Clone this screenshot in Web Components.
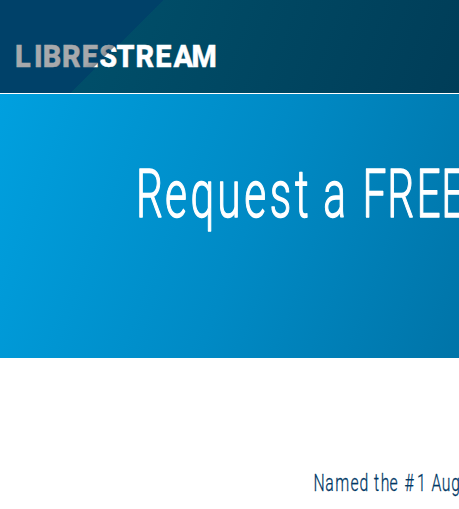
<!DOCTYPE html>
<html lang="en">
<head>
<meta charset="utf-8">
<title>Librestream</title>
<style>
body{margin:0;background:#fff;overflow:hidden;font-family:Roboto,"Liberation Sans",sans-serif}
</style>
</head>
<body>
<site-page></site-page>
<script>
// Condensed text line: "xs" holds the pen position of every character.
class CondensedText extends HTMLElement {
  connectedCallback() {
    const a = n => this.getAttribute(n);
    const s = +a('scale');
    const xs = a('xs').split(' ').map(v => (v / s).toFixed(2)).join(' ');
    this.attachShadow({mode: 'open'}).innerHTML = `
      <style>:host{display:block}svg{display:block;width:100%;height:100%;overflow:visible}
      text{font-family:Roboto,"Liberation Sans",sans-serif;white-space:pre;font-kerning:none;stroke:currentColor;stroke-linejoin:round}</style>
      <svg><text transform="scale(${s} 1)" x="${xs}" y="${a('base')}" font-size="${a('size')}" font-weight="300" stroke-width="${a('stroke')}" fill="currentColor">${a('text')}</text></svg>`;
  }
}
customElements.define('condensed-text', CondensedText);

customElements.define('site-logo', class extends HTMLElement {
  constructor() {
    super();
    const s = 0.93;
    const xs = [-0.9, 18, 26.7, 46, 65.8, 83.2, 100.4, 119.4, 139.3, 157.4, 175.6].map(v => (v / s).toFixed(2)).join(' ');
    this.attachShadow({mode: 'open'}).innerHTML = `
      <style>:host{display:block;width:220px;height:30px}svg{display:block;overflow:visible}
      text{font:800 31px Roboto,"Liberation Sans",sans-serif;font-kerning:none}</style>
      <svg width="220" height="30" role="img" aria-label="Librestream">
        <defs><linearGradient id="g" gradientUnits="userSpaceOnUse" x1="0" y1="0" x2="53.5" y2="53.5" gradientTransform="scale(${1 / s} 1)">
          <stop offset="0" stop-color="#a7a9ac"/><stop offset=".87" stop-color="#a7a9ac"/>
          <stop offset=".975" stop-color="#858b91"/><stop offset=".99" stop-color="#fff"/></linearGradient></defs>
        <text transform="scale(${s} 1)" y="26.6" x="${xs}" fill="url(#g)" stroke="url(#g)" stroke-width=".5">LIBRESTREAM</text>
      </svg>`;
  }
});

customElements.define('site-header', class extends HTMLElement {
  constructor() {
    super();
    this.attachShadow({mode: 'open'}).innerHTML = `
      <style>:host{display:block;box-sizing:border-box;height:94px;padding:40px 0 0 16px;border-bottom:1px solid #fff;
      background:linear-gradient(135deg,#004169 0 115.5px,transparent 116px) 0 0/100% 93px no-repeat,
      linear-gradient(110deg,#00506b 15%,#003d58 100%)}</style><slot></slot>`;
  }
});

customElements.define('hero-banner', class extends HTMLElement {
  constructor() {
    super();
    this.attachShadow({mode: 'open'}).innerHTML = `
      <style>:host{display:block;box-sizing:border-box;height:264px;padding-top:60px;color:#fff;
      background:linear-gradient(110deg,#00a0df 0,#008ac5 53%,#0074a8 100%)}
      ::slotted(*){height:90px}</style><slot></slot>`;
  }
});

customElements.define('intro-section', class extends HTMLElement {
  constructor() {
    super();
    this.attachShadow({mode: 'open'}).innerHTML = `
      <style>:host{display:block;padding-top:106px;color:#003865}
      ::slotted(*){height:40px}</style><slot></slot>`;
  }
});

customElements.define('site-page', class extends HTMLElement {
  constructor() {
    super();
    this.attachShadow({mode: 'open'}).innerHTML = `
      <style>:host{display:flex;flex-direction:column;height:509px;background:#fff}</style>
      <site-header><site-logo></site-logo></site-header>
      <hero-banner><condensed-text text="Request a FREE" size="67.3" stroke="1.4" scale="0.63" base="62.6"
        xs="136 165 190.6 217.3 244.3 269.8 294.9 312 323.3 345 362.5 387.2 416.6 441.2"></condensed-text></hero-banner>
      <intro-section><condensed-text text="Named the #1 Aug" size="24.6" stroke="0.3" scale="0.64" base="27"
        xs="313.6 325.2 335.2 350.5 359.6 369 373.9 380.8 389.5 399 404.5 416.9 426 431.5 441.7 451.3"></condensed-text></intro-section>`;
  }
});
</script>
</body>
</html>
